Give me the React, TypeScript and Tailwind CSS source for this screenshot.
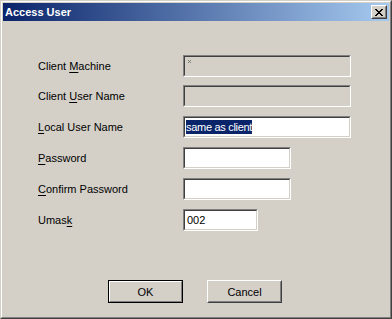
import React from "react";

const font = { fontFamily: '"Liberation Sans", Arial, sans-serif' };

function CloseGlyph() {
  const rows = ["XX....XX", ".XX..XX.", "..XXXX..", "...XX...", "..XXXX..", ".XX..XX.", "XX....XX"];
  const rects: React.ReactElement[] = [];
  rows.forEach((r, y) =>
    r.split("").forEach((c, x) => {
      if (c === "X") rects.push(<rect key={`${x}-${y}`} x={x} y={y} width={1} height={1} fill="#000" />);
    })
  );
  return (
    <svg width="8" height="7" viewBox="0 0 8 7" shapeRendering="crispEdges">
      {rects}
    </svg>
  );
}

function Field({
  width,
  disabled,
  children,
}: {
  width: string;
  disabled?: boolean;
  children?: React.ReactNode;
}) {
  return (
    <div className={`${width} h-[22px] border border-t-[#808080] border-l-[#808080] border-b-white border-r-white`}>
      <div
        className={`h-full w-full border border-t-[#404040] border-l-[#404040] border-b-[#d4d0c8] border-r-[#d4d0c8] ${
          disabled ? "bg-[#d4d0c8]" : "bg-white"
        } flex items-center pl-[1px] text-[11px] leading-[14px] text-black`}
      >
        {children}
      </div>
    </div>
  );
}

function Label({ pre, acc, post }: { pre: string; acc: string; post: string }) {
  return (
    <div className="w-[145px] text-[11px] leading-[14px] text-black">
      {pre}
      <span className="underline decoration-1 underline-offset-[2px]">{acc}</span>
      {post}
    </div>
  );
}

function Row({ children }: { children: React.ReactNode }) {
  return <div className="flex items-center">{children}</div>;
}

export default function App() {
  return (
    <div style={font} className="w-[392px] h-[319px] bg-[#d4d0c8] select-none">
      <div className="w-full h-full border border-t-[#d4d0c8] border-l-[#d4d0c8] border-b-[#404040] border-r-[#404040]">
        <div className="w-full h-full border border-t-white border-l-white border-b-[#808080] border-r-[#808080] p-[1px] flex flex-col">
          {/* Title bar */}
          <div className="h-[18px] flex items-start bg-[linear-gradient(to_right,#0a246a,#a6caf0)] shrink-0">
            <div className="pl-[2px] pt-[2px] text-[11px] leading-[14px] font-bold text-white flex-1">Access User</div>
            <div className="mt-[2px] mr-[2px] w-[16px] h-[14px] bg-[#d4d0c8] border border-t-white border-l-white border-b-[#404040] border-r-[#404040]">
              <div className="w-full h-full border border-t-[#d4d0c8] border-l-[#d4d0c8] border-b-[#808080] border-r-[#808080] flex items-center justify-center">
                <CloseGlyph />
              </div>
            </div>
          </div>

          {/* Body */}
          <div className="flex flex-col pl-[35px] pt-[34px]">
            <Row>
              <Label pre="Client " acc="M" post="achine" />
              <Field width="w-[168px]" disabled>
                <div className="self-start mt-[3px] ml-[2px]">
                  <svg width="3" height="3" viewBox="0 0 3 3" shapeRendering="crispEdges">
                    <rect x="0" y="0" width="1" height="1" fill="#808080" />
                    <rect x="2" y="0" width="1" height="1" fill="#808080" />
                    <rect x="1" y="1" width="1" height="1" fill="#808080" />
                    <rect x="0" y="2" width="1" height="1" fill="#808080" />
                    <rect x="2" y="2" width="1" height="1" fill="#808080" />
                  </svg>
                </div>
              </Field>
            </Row>
            <div className="mt-[8px]">
              <Row>
                <Label pre="Client " acc="U" post="ser Name" />
                <Field width="w-[168px]" disabled />
              </Row>
            </div>
            <div className="mt-[9px]">
              <Row>
                <Label pre="" acc="L" post="ocal User Name" />
                <Field width="w-[168px]">
                  <span className="bg-[#0a246a] text-white tracking-[-0.3px]">same as client</span>
                </Field>
              </Row>
            </div>
            <div className="mt-[9px]">
              <Row>
                <Label pre="" acc="P" post="assword" />
                <Field width="w-[108px]" />
              </Row>
            </div>
            <div className="mt-[9px]">
              <Row>
                <Label pre="" acc="C" post="onfirm Password" />
                <Field width="w-[108px]" />
              </Row>
            </div>
            <div className="mt-[9px]">
              <Row>
                <Label pre="Umas" acc="k" post="" />
                <Field width="w-[75px]">
                  <span className="pl-[1px]">002</span>
                </Field>
              </Row>
            </div>
          </div>

          {/* Buttons */}
          <div className="flex pl-[105px] mt-[49px] gap-[24px]">
            <div className="w-[75px] h-[23px] border border-black">
              <div className="w-full h-full border border-t-white border-l-white border-b-[#808080] border-r-[#808080] flex items-center justify-center text-[11px] leading-[14px] text-black">
                OK
              </div>
            </div>
            <div className="w-[75px] h-[23px] border border-t-white border-l-white border-b-[#404040] border-r-[#404040]">
              <div className="w-full h-full border border-t-[#d4d0c8] border-l-[#d4d0c8] border-b-[#808080] border-r-[#808080] flex items-center justify-center text-[11px] leading-[14px] text-black">
                Cancel
              </div>
            </div>
          </div>
        </div>
      </div>
    </div>
  );
}
